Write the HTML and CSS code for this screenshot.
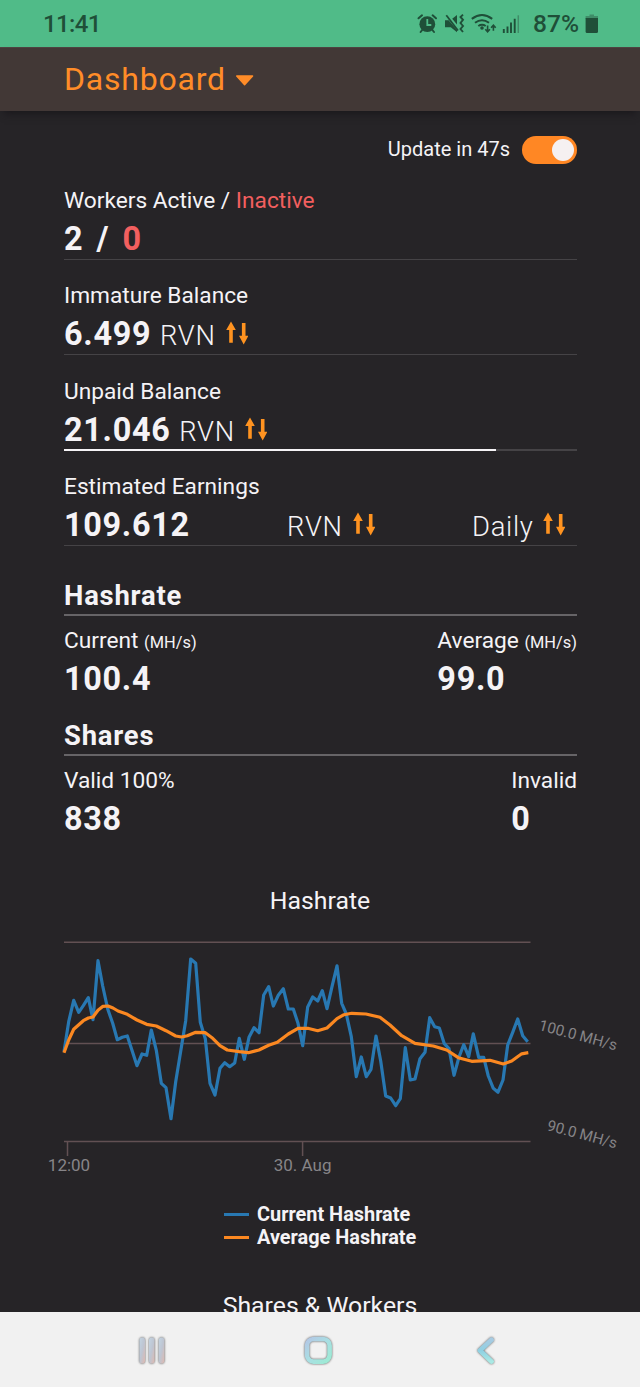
FILE: index.html
```html
<!DOCTYPE html>
<html lang="en">
<head>
  <meta charset="UTF-8" />
  <meta name="viewport" content="width=device-width, initial-scale=1" />
  <title>Dashboard</title>
  <link rel="stylesheet" href="styles.css">
</head>
<body>
  <!-- Shared icons -->
  <svg class="defs" width="0" height="0">
    <symbol id="swap" viewBox="0 0 24 24">
      <path d="M7 0.5 L11.8 9 H8.8 V21.8 H5.2 V9 H2.2 Z M19.7 23.6 L15 14.8 H17.9 V2 H21.5 V14.8 H24.4 Z" />
    </symbol>
  </svg>

  <div class="status-bar">
    <span class="clock">11:41</span>
    <div class="status-icons">
      <svg class="status-svg" width="106" height="24" viewBox="416 12 106 24">
        <!-- alarm -->
        <circle cx="427.3" cy="24.2" r="7.9" fill="#1f4f38" />
        <path d="M427.3 19 V25 H431.3" fill="none" stroke="#50bb88" stroke-width="1.8" />
        <path d="M418.5 18.3 L422 15.3 M436 18.3 L432.6 15.3 M422.6 29.5 L420.6 32 M432 29.5 L434 32" fill="none" stroke="#1f4f38" stroke-width="2" stroke-linecap="round" />
        <!-- mute and vibrate -->
        <path d="M445 20.3 H448.6 L457 30 V32.2 L450.8 27.3 H445 Z M457 15 V24.4 L452.2 18.7 Z" fill="#1f4f38" />
        <path d="M446.3 15.3 L458 30.5" stroke="#1f4f38" stroke-width="1.8" />
        <path d="M463 14.6 L460.5 17 L463 19.8 L460.5 23 L463 26 L460.5 29 L463 32" fill="none" stroke="#1f4f38" stroke-width="1.9" />
        <!-- wifi -->
        <path d="M471.8 18.9 Q482 11.2 492.2 18.9 M475 22.8 Q482 17.6 489 22.8 M478.3 26 Q482 23.5 485.7 26" fill="none" stroke="#1f4f38" stroke-width="2" />
        <circle cx="482" cy="28" r="1.8" fill="#1f4f38" />
        <path d="M487.6 25.5 V31.5 M485.3 29.2 L487.6 31.7 L489.9 29.2 M493.4 30.8 V25.5 M491.1 27.8 L493.4 25.3 L495.7 27.8" fill="none" stroke="#1f4f38" stroke-width="1.6" />
        <!-- signal -->
        <path d="M503.8 29 V33 M507.5 26.4 V33 M511 22.5 V33 M514.7 18.8 V33" stroke="#1f4f38" stroke-width="1.9" />
        <path d="M518.3 15.3 V33" stroke="#3f8d68" stroke-width="1.5" />
      </svg>
      <span class="battery-text">87%</span>
      <svg class="battery" width="14" height="20" viewBox="0 0 14 20">
        <path d="M4.5 0.5 H9 V2 H13 V5 H0.6 V2 H4.5 Z" fill="#3f8d68" />
        <path d="M0.6 4 H13 V17.5 Q13 19 11.5 19 H2 Q0.6 19 0.6 17.5 Z" fill="#1f4f38" />
      </svg>
    </div>
  </div>

  <div class="header">
    <h1>Dashboard</h1>
    <svg class="caret" width="20" height="12" viewBox="0 0 20 12"><path d="M1.7 1 H17.6 L9.6 9.8 Z" fill="#ff8c28" stroke="#ff8c28" stroke-width="1.4" stroke-linejoin="round" /></svg>
  </div>

  <div class="container">
    <div class="update">
      <span class="update-text">Update in 47s</span>
      <div class="toggle"><div class="knob"></div></div>
    </div>

    <div class="stat">
      <p class="label">Workers Active / <span class="red">Inactive</span></p>
      <div class="value workers">2 / <span class="red">0</span></div>
    </div>

    <div class="stat">
      <p class="label">Immature Balance</p>
      <div class="value">6.499 <span class="unit">RVN</span><svg class="swap"><use href="#swap" /></svg></div>
    </div>

    <div class="stat unpaid">
      <p class="label">Unpaid Balance</p>
      <div class="value">21.046 <span class="unit">RVN</span><svg class="swap"><use href="#swap" /></svg></div>
      <div class="progress"><div class="progress-fill" style="width: 84.2%"></div></div>
    </div>

    <div class="stat">
      <p class="label">Estimated Earnings</p>
      <div class="value earnings">
        <span>109.612</span>
        <div><span class="unit">RVN</span><svg class="swap"><use href="#swap" /></svg></div>
        <div><span class="unit">Daily</span><svg class="swap"><use href="#swap" /></svg></div>
      </div>
    </div>

    <h2 class="hashrate-title">Hashrate</h2>
    <div class="pair">
      <div>
        <p class="label">Current <small>(MH/s)</small></p>
        <div class="value">100.4</div>
      </div>
      <div>
        <p class="label">Average <small>(MH/s)</small></p>
        <div class="value">99.0</div>
      </div>
    </div>

    <h2>Shares</h2>
    <div class="pair">
      <div>
        <p class="label">Valid 100%</p>
        <div class="value">838</div>
      </div>
      <div>
        <p class="label">Invalid</p>
        <div class="value">0</div>
      </div>
    </div>
  </div>

  <h3>Hashrate</h3>
  <svg class="chart" width="640" height="256" viewBox="0 924 640 256">
    <path class="grid" d="M64 942.3 H530.5 M64 1043.5 H530.5 M64 1141.5 H530.5 M67.5 1141.5 V1156 M302.6 1141.5 V1156" />
    <polyline class="line current" points="64,1051.7 68.7,1021.7 73.7,1000.3 78.7,1012.3 83.3,1005.7 88.3,997.7 93,1019.7 98,960.7 102.7,986 107.7,1009 112.7,1023.3 117.3,1039.7 122.3,1037.3 127.3,1036 132.3,1051.3 137,1065.7 142,1054 146.7,1055.3 151.3,1030 156.3,1050.3 161.3,1083.3 166,1087.7 171,1118.7 175.7,1081.7 180.7,1051.3 185.7,1020.7 190.7,959 195.7,963.3 200.3,1022.3 205.3,1038.7 210,1083.3 215,1095 220,1068.3 224.7,1062.7 229.7,1066.7 234.7,1063 239.3,1038.3 244.3,1059.3 249,1037.3 254,1027.7 259,1032.7 263.7,995 268.7,986.7 273.3,1006 278.3,995.3 283.3,988.7 288.3,1009 293.3,1009 298,1023.3 302.7,1045.7 307.7,1007 312.7,997 317.7,1001 322.3,990.7 327,1008.7 332,986.7 337,965.8 341.7,1003.3 346.3,1014 351.3,1036.7 356.3,1076.7 361.3,1057 366.3,1076.7 371,1069.3 376,1036 380.7,1061 385.7,1096 390.7,1098 395.7,1105.7 400.3,1098.7 405.3,1047.7 410.3,1080 415,1079 420,1058.7 425,1052.3 429.7,1017.7 434.7,1026.7 439.3,1028 444.3,1043.7 449,1048.7 454,1075.3 459,1057 463.7,1044.7 468.7,1056.7 473.3,1033.8 478.7,1057.3 483.7,1057.3 488.3,1076 493.3,1088.3 498,1092.2 503,1080 507.7,1045 512.7,1032.3 517.7,1019 522.7,1035.7 527.7,1041.7" />
    <polyline class="line average" points="64,1052.7 68.7,1040 73.7,1029.3 83.3,1020.7 88.3,1018 93,1017 98,1010.3 103,1006.3 108,1006 113,1008 118,1011 127.3,1014.3 137,1020 146.7,1024.3 156.3,1026 166,1030.7 175.7,1036 181.7,1037 187.3,1035.7 195.7,1032.3 205.3,1032.7 212.7,1038.3 220,1045.7 227.3,1050 239.3,1051.7 248.3,1052.7 259,1050 268.7,1045.3 277.3,1042.3 288.3,1034 298,1028.3 307.7,1028.3 317.7,1030.7 327,1028 337,1018.7 344,1014.7 351.7,1013.3 366,1014 380,1017.3 390,1025 401.7,1035.7 415,1043.3 433.3,1046 446.7,1050 458.3,1057.7 471.7,1061.3 490,1060.3 503.3,1064 511.7,1061 521.7,1053.8 528.3,1052.7" />
    <text class="axis" x="69" y="1171" text-anchor="middle">12:00</text>
    <text class="axis" x="302.6" y="1171" text-anchor="middle">30. Aug</text>
    <text class="axis tilted" x="615.5" y="1050.5" text-anchor="end" transform="rotate(15 615.5 1050.5)">100.0 MH/s</text>
    <text class="axis tilted" x="615.5" y="1148.5" text-anchor="end" transform="rotate(15 615.5 1148.5)">90.0 MH/s</text>
  </svg>

  <div class="legend">
    <div class="legend-item"><span class="dash blue"></span>Current Hashrate</div>
    <div class="legend-item"><span class="dash orange"></span>Average Hashrate</div>
  </div>

  <h3 class="next-chart">Shares &amp; Workers</h3>

  <div class="nav-bar">
    <svg width="640" height="75" viewBox="0 0 640 75">
      <defs>
        <linearGradient id="bars" x1="0" y1="0" x2="1" y2="1">
          <stop offset="0" stop-color="#c3d4e2" />
          <stop offset="0.5" stop-color="#bec5d2" />
          <stop offset="1" stop-color="#dfb9af" />
        </linearGradient>
        <linearGradient id="home" x1="0" y1="0" x2="1" y2="1">
          <stop offset="0" stop-color="#b3c7e5" />
          <stop offset="0.5" stop-color="#a9dfe3" />
          <stop offset="1" stop-color="#9cebd3" />
        </linearGradient>
        <linearGradient id="back" x1="0" y1="0" x2="0" y2="1">
          <stop offset="0" stop-color="#a7cbe2" />
          <stop offset="0.5" stop-color="#8fd0e2" />
          <stop offset="1" stop-color="#a9e9e4" />
        </linearGradient>
      </defs>
      <g class="nav-icons">
        <g fill="url(#bars)">
          <rect x="139.5" y="25.5" width="5.5" height="26" rx="2.7" />
          <rect x="149" y="25.5" width="5.5" height="26" rx="2.7" />
          <rect x="158.8" y="25.5" width="5.5" height="26" rx="2.7" />
        </g>
        <rect x="307" y="27" width="22.6" height="22.6" rx="6.5" fill="none" stroke="url(#home)" stroke-width="4.6" />
        <path d="M491.5 27.8 L480 38.6 L491.5 49.4" fill="none" stroke="url(#back)" stroke-width="4.8" stroke-linecap="round" stroke-linejoin="round" />
      </g>
    </svg>
  </div>
</body>
</html>
```

FILE: styles.css
```css
/* Reset */
* {
  margin: 0; padding: 0; box-sizing: border-box;
}
body {
  background: #262427;
  color: #f5f3f6;
  font-family: Roboto, sans-serif;
  height: 1387px;
  overflow: hidden;
  display: flex;
  flex-direction: column;
}
.defs {
  display: none;
}
/* Status bar */
.status-bar {
  height: 47px;
  flex: none;
  background: #50bb88;
  color: #1f4f38;
  display: flex;
  justify-content: space-between;
  align-items: center;
  padding: 0 41px 0 43px;
  font-size: 24px;
}
.clock {
  font-weight: 500;
  letter-spacing: -0.6px;
}
.status-icons {
  display: flex;
  align-items: center;
}
.battery-text {
  font-weight: 500;
  font-size: 24.5px;
  margin-left: 11px;
}
.battery {
  margin-left: 6px;
}
/* Header */
.header {
  height: 64px;
  flex: none;
  background: #423836;
  border-top: 1px solid #4d4340;
  box-shadow: 0 6px 8px -4px #18161a;
  padding: 0 64px 2px;
  display: flex;
  align-items: center;
}
.header h1 {
  color: #ff8c28;
  font-size: 32px;
  font-weight: 400;
  letter-spacing: 0.8px;
}
.caret {
  margin: 4px 0 0 9px;
}
/* Content */
.container {
  flex: none;
  padding: 0 63px 0 64px;
}
.update {
  display: flex;
  justify-content: flex-end;
  align-items: center;
  height: 28px;
  margin: 25px 0 23px;
  font-size: 20px;
}
.update-text {
  padding-bottom: 2px;
}
.toggle {
  width: 55px;
  height: 28px;
  border-radius: 14px;
  background: #ff8724;
  margin-left: 12px;
  padding: 3px;
  display: flex;
  justify-content: flex-end;
}
.knob {
  width: 22px;
  height: 22px;
  border-radius: 50%;
  background: #f5f0f1;
}
/* Stats */
.stat {
  height: 73px;
  margin-bottom: 22.4px;
  border-bottom: 1px solid #454346;
}
.label {
  font-size: 22.7px;
  line-height: 28px;
  margin-bottom: 4px;
}
.label small {
  font-size: 16.4px;
  line-height: 1;
}
.value {
  font-size: 32.4px;
  font-weight: 700;
  height: 40px;
  line-height: 41px;
  letter-spacing: 0.7px;
  white-space: nowrap;
}
.workers {
  word-spacing: 4.5px;
}
.unit {
  font-size: 27.4px;
  font-weight: 300;
  line-height: 1;
}
.red {
  color: #f25f5f;
}
.swap {
  width: 24px;
  height: 24px;
  margin-left: 8px;
  fill: #ff9320;
  overflow: visible;
}
.unpaid {
  border-bottom: none;
}
.progress {
  height: 2px;
  margin-top: -1px;
  background: #454346;
}
.progress-fill {
  height: 2px;
  background: #f5f3f6;
}
.earnings {
  display: flex;
  justify-content: space-between;
  line-height: 40px;
  padding-right: 11.5px;
}
/* Sections */
h2 {
  font-size: 27.4px;
  line-height: 32px;
  letter-spacing: 0.8px;
  padding: 1px 0 2px;
  border-bottom: 2px solid #666467;
}
.hashrate-title {
  margin-top: 33px;
}
.pair {
  display: flex;
  justify-content: space-between;
  height: 103px;
  padding-top: 11px;
}
/* Chart */
h3 {
  font-size: 24.8px;
  font-weight: 400;
  line-height: 30px;
  text-align: center;
  flex: none;
  margin-top: 27px;
}
.chart {
  flex: none;
  margin-top: 8px;
}
.grid {
  fill: none;
  stroke: #625053;
  stroke-width: 1.5;
}
.line {
  fill: none;
  stroke-width: 3.2;
  stroke-linejoin: round;
}
.current {
  stroke: #2878b2;
}
.average {
  stroke: #fb8821;
}
.axis {
  font-size: 17px;
  fill: #878588;
}
.tilted {
  font-size: 15.2px;
}
.legend {
  flex: none;
  margin: 22.6px 0 0 224px;
}
.legend-item {
  display: flex;
  align-items: center;
  font-size: 19.9px;
  font-weight: 700;
  line-height: 23px;
}
.dash {
  width: 25px;
  height: 3px;
  margin-right: 8px;
}
.blue {
  background: #2878b2;
}
.orange {
  background: #fb8821;
}
.next-chart {
  font-size: 24.8px;
  margin-top: 42px;
  height: 21px;
  overflow: hidden;
}
/* Navigation bar */
.nav-bar {
  flex: none;
  height: 75px;
  margin-top: auto;
  background: #f1f1f1;
}
.nav-icons {
  filter: drop-shadow(0.8px 0.8px 0.8px #555);
}
```
